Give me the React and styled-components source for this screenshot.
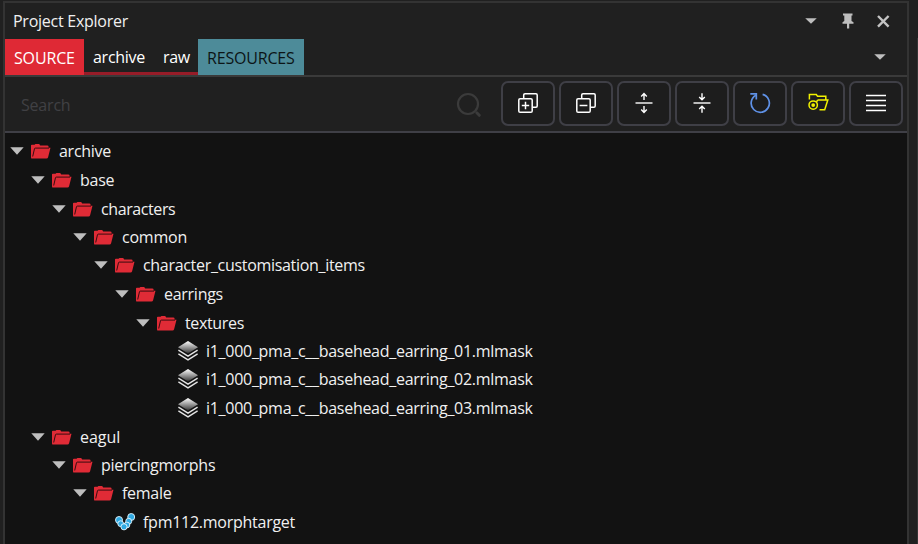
import React from "react";
import styled, { createGlobalStyle } from "styled-components";

const Global = createGlobalStyle`
  * { box-sizing: border-box; }
  html, body { margin: 0; background: #202020; overflow: hidden; }
  body { font-family: "Open Sans", "Noto Sans", sans-serif; font-size: 16px; color: #f0f0f0; }
  svg { display: block; flex: none; }
`;

const Shell = styled.div`
  display: flex;
  width: 918px;
  height: 544px;
  padding: 1px 0 0 3px;
  overflow: hidden;
`;

const Panel = styled.section`
  display: flex;
  flex-direction: column;
  width: 906px;
  height: 560px;
  border: 2px solid #333333;
  flex: none;
`;

const Gutter = styled.div`
  flex: 1;
  margin-top: 37px;
  border-right: 1px solid #343434;
`;

const TitleBar = styled.header`
  display: flex;
  align-items: center;
  height: 36px;
  padding: 0 17px 0 8px;
  flex: none;
`;

const Label = styled.span`
  display: inline-block;
  white-space: pre;
  line-height: 22px;
  font-stretch: 92%;
  letter-spacing: ${(p) => p.$track ?? -0.25}px;
`;

const WindowActions = styled.div`
  display: flex;
  align-items: center;
  margin-left: auto;
`;

const PinSlot = styled.div`
  margin: 0 23px 0 25px;
`;

const TabBar = styled.nav`
  display: flex;
  height: 38px;
  border-bottom: 2px solid #3a3a3a;
  flex: none;
`;

const tones = {
  source: "background: #df2935; color: #ffffff; padding-top: 2px;",
  plain: "border-bottom: 3px solid #961c28; color: #ffffff; padding-top: 3px;",
  resources: "background: #4d8b99; color: #0c1416; padding-top: 2px;",
};

const Tab = styled.div`
  display: flex;
  align-items: center;
  width: ${(p) => p.$width}px;
  height: 36px;
  padding-left: 9px;
  ${(p) => tones[p.$tone]}
`;

const TabMenu = styled.div`
  display: flex;
  align-items: center;
  margin-left: auto;
  padding-right: 21px;
`;

const SearchBar = styled.div`
  display: flex;
  height: 56px;
  padding: 4px 4px 0 16px;
  border-bottom: 2px solid #3f3f46;
  flex: none;
`;

const SearchField = styled.div`
  display: flex;
  align-items: center;
  justify-content: space-between;
  width: 480px;
  height: 47px;
  padding-right: 19px;
  color: #404044;
`;

const Tools = styled.div`
  display: flex;
  gap: 4px;
`;

const ToolButton = styled.button`
  display: flex;
  align-items: center;
  justify-content: center;
  width: 54px;
  height: 45px;
  padding: 0 0 1px;
  border: 2px solid #3f3f46;
  border-radius: 7px;
  background: #1d1d1d;
`;

const Tree = styled.div`
  flex: 1;
  padding-top: 4px;
  background: #121212;
  overflow: hidden;
`;

const Row = styled.div`
  display: flex;
  align-items: center;
  height: 28px;
  padding-left: ${(p) => 5 + p.$depth * 21}px;

  &:nth-child(4n + 1),
  &:nth-child(4n + 2) {
    margin-bottom: 1px;
  }
`;

const ArrowSlot = styled.div`
  width: 21px;
  height: 8px;
`;

const IconSlot = styled.div`
  width: 28px;
`;

const Triangle = ({ w = 14, h = 8, fill = "#bebebe" }) => (
  <svg width={w} height={h} viewBox="0 0 14 8" preserveAspectRatio="none">
    <path d="M0.3 0.3H13.7L7 7.8Z" fill={fill} />
  </svg>
);

const PinIcon = () => (
  <svg width="12" height="16" viewBox="0 0 12 16">
    <path d="M1 0.5H10.5V2.5H9.5V8L11.5 9.2V10.7H7.2V15.5H5V10.7H0.5V9.2L2.3 8V2.5H1Z" fill="#bebebe" />
  </svg>
);

const CloseIcon = () => (
  <svg width="13" height="13" viewBox="0 0 13 13">
    <path d="M1 1L11.6 11.6M11.6 1L1 11.6" stroke="#c4c4c4" strokeWidth="2.4" />
  </svg>
);

const SearchIcon = () => (
  <svg width="26" height="26" viewBox="0 0 26 26" fill="none" stroke="#3b3b3b">
    <circle cx="12" cy="12" r="10" strokeWidth="2.2" />
    <path d="M20.8 20.8L23.3 23.3" strokeWidth="3" strokeLinecap="round" />
  </svg>
);

const CopyIcon = ({ plus }) => (
  <svg width="22" height="22" viewBox="0 0 22 22" fill="none" stroke="#ffffff" strokeWidth="1.5">
    <rect x="1.8" y="6.8" width="13.4" height="13.4" rx="1.3" />
    <path d="M6.7 6.5V3Q6.7 1.8 8 1.8H19Q20.2 1.8 20.2 3V14Q20.2 15.2 19 15.2H15.5" />
    {plus ? <path d="M4.8 13.5H7.7M9.3 13.5H12.2M8.5 9.8V12.7M8.5 14.3V17.2M7.7 13.5H9.3" /> : <path d="M4.6 13.5H12.4" />}
  </svg>
);

const SplitIcon = ({ inward }) => (
  <svg width="18" height="22" viewBox="0 0 18 22" fill="none" stroke="#ffffff" strokeWidth="1.4">
    <path d="M0.5 11H17.5" />
    {inward ? (
      <path d="M9 1.2V7.7M6.2 5L9 7.8L11.8 5M9 20.8V14.3M6.2 17L9 14.2L11.8 17" />
    ) : (
      <path d="M9 8V1.7M6.2 4.4L9 1.6L11.8 4.4M9 14V20.3M6.2 17.6L9 20.4L11.8 17.6" />
    )}
  </svg>
);

const RefreshIcon = () => (
  <svg width="22" height="22" viewBox="0 0 22 22" fill="none" stroke="#5f91e6" strokeWidth="1.7">
    <path d="M13.6 2.4A9.1 9.1 0 1 1 6.9 3.2" />
    <path d="M1.3 1.8H7.3V7.6" />
  </svg>
);

const OpenFolderIcon = () => (
  <svg width="21" height="20" viewBox="0 0 21 20" fill="none" stroke="#f2f200" strokeWidth="1.5">
    <path d="M1.4 6.6V1.6H8.3L9.5 3.2H17.8V7" />
    <path d="M9.5 7.1H19.8L16.7 16.7H11.5M9.5 7.1L8.6 9" />
    <circle cx="5.2" cy="12.1" r="4.2" />
    <circle cx="5.2" cy="12.1" r="1.9" fill="#f2f200" stroke="none" />
  </svg>
);

const LinesIcon = () => (
  <svg width="20" height="18" viewBox="0 0 20 18">
    <path d="M0 1.5H20M0 6.5H20M0 11.5H20M0 16.5H20" stroke="#ffffff" strokeWidth="1.7" />
  </svg>
);

const FolderIcon = ({ fill = "#e02b36" }) => (
  <svg width="20" height="15" viewBox="0 0 20 15">
    <path
      fill={fill}
      d="M0 1.5Q0 .7 .8 .7H3.6L4.4 0H8.2L9.2 1.4H16.2Q17.6 1.4 17.6 2.7V3.7H19.5L17.1 13.2Q16.8 14.6 15.5 14.6H1.2Q0 14.6 0 13.4Z"
    />
    <path d="M1.7 12.5L3.5 4.6Q3.7 4.1 4.4 4.1H18" fill="none" stroke="#24080a" strokeWidth="0.9" />
  </svg>
);

const LayersIcon = () => (
  <svg width="20" height="20" viewBox="0 0 20 20">
    <defs>
      <linearGradient id="layerShade" x1="0" y1="0" x2="0" y2="1">
        <stop offset="0" stopColor="#ffffff" />
        <stop offset="0.85" stopColor="#555555" />
        <stop offset="1" stopColor="#292929" />
      </linearGradient>
    </defs>
    <path d="M10 0L20 6.3L10 12.4L0 6.3Z" fill="url(#layerShade)" />
    <path d="M.4 9.2L10 15.2L19.6 9.2M.4 12.8L10 18.8L19.6 12.8" fill="none" stroke="#e4e4e4" strokeWidth="1.4" />
  </svg>
);

const beads = [
  [16.2, 4, 3.5],
  [4, 7, 3.5],
  [5.7, 10.7, 2.9],
  [13.7, 8.3, 3],
  [11.9, 12, 2.9],
  [9, 13.8, 3.1],
];

const MorphIcon = () => (
  <svg width="20" height="18" viewBox="0 0 20 18">
    {beads.map(([x, y, r]) => (
      <circle key={`${x}-${y}`} cx={x} cy={y} r={r} fill="#2fa9e2" stroke="#e8f6fd" strokeWidth="0.9" />
    ))}
  </svg>
);

const nodes = [
  ["archive", 0, "folder", -0.27],
  ["base", 1, "folder", -0.25],
  ["characters", 2, "folder", -0.4],
  ["common", 3, "folder", -0.22],
  ["character_customisation_items", 4, "folder", -0.31],
  ["earrings", 5, "folder", -0.27],
  ["textures", 6, "folder", -0.35],
  ["i1_000_pma_c__basehead_earring_01.mlmask", 7, "mask", -0.29],
  ["i1_000_pma_c__basehead_earring_02.mlmask", 7, "mask", -0.29],
  ["i1_000_pma_c__basehead_earring_03.mlmask", 7, "mask", -0.29],
  ["eagul", 1, "folder", -0.05],
  ["piercingmorphs", 2, "folder", -0.25],
  ["female", 3, "folder", -0.27],
  ["fpm112.morphtarget", 4, "morph", -0.26],
  ["", 0, "raw", 0],
];

const icons = {
  folder: <FolderIcon />,
  mask: <LayersIcon />,
  morph: <MorphIcon />,
  raw: <FolderIcon fill="#8a5a3a" />,
};

export default function App() {
  return (
    <Shell>
      <Global />
      <Panel>
        <TitleBar>
          <Label $track={-0.26}>Project Explorer</Label>
          <WindowActions>
            <Triangle w={12} h={6} />
            <PinSlot><PinIcon /></PinSlot>
            <CloseIcon />
          </WindowActions>
        </TitleBar>
        <TabBar>
          <Tab $tone="source" $width={79}><Label $track={-0.15}>SOURCE</Label></Tab>
          <Tab $tone="plain" $width={70}><Label $track={-0.27}>archive</Label></Tab>
          <Tab $tone="plain" $width={44}><Label $track={-0.4}>raw</Label></Tab>
          <Tab $tone="resources" $width={106}><Label $track={-0.18}>RESOURCES</Label></Tab>
          <TabMenu><Triangle w={12} h={6} /></TabMenu>
        </TabBar>
        <SearchBar>
          <SearchField>
            <Label $track={-0.2}>Search</Label>
            <SearchIcon />
          </SearchField>
          <Tools>
            <ToolButton><CopyIcon plus /></ToolButton>
            <ToolButton><CopyIcon /></ToolButton>
            <ToolButton><SplitIcon /></ToolButton>
            <ToolButton><SplitIcon inward /></ToolButton>
            <ToolButton><RefreshIcon /></ToolButton>
            <ToolButton><OpenFolderIcon /></ToolButton>
            <ToolButton><LinesIcon /></ToolButton>
          </Tools>
        </SearchBar>
        <Tree>
          {nodes.map(([name, depth, kind, track]) => (
            <Row key={name} $depth={depth}>
              <ArrowSlot>{kind === "folder" && <Triangle />}</ArrowSlot>
              <IconSlot>{icons[kind]}</IconSlot>
              <Label $track={track}>{name}</Label>
            </Row>
          ))}
        </Tree>
      </Panel>
      <Gutter />
    </Shell>
  );
}
